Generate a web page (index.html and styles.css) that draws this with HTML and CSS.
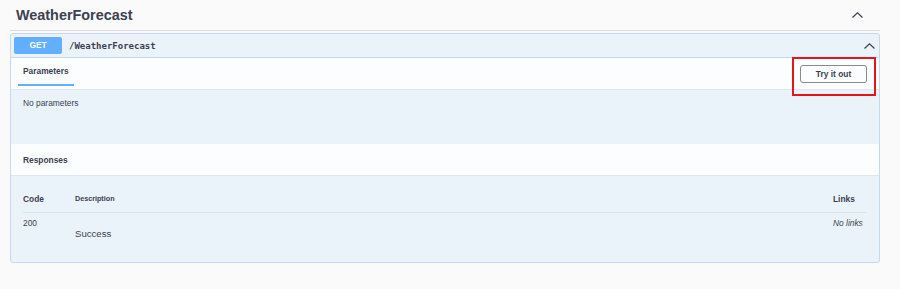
FILE: index.html
```html
<!DOCTYPE html>
<html lang="en">
<head>
<meta charset="utf-8">
<title>WeatherForecast</title>
<link rel="stylesheet" href="styles.css">
</head>
<body>
<div class="wrapper">
  <div class="tag">
    <h3 class="tag-title">WeatherForecast</h3>
    <svg class="chev" width="11" height="6" viewBox="0 0 11 6"><path d="M0.5 5.5 L5.5 0.8 L10.5 5.5" fill="none" stroke="#3b4151" stroke-width="1.2"/></svg>
  </div>
  <div class="opblock">
    <div class="summary">
      <span class="method">GET</span>
      <span class="path">/WeatherForecast</span>
      <svg class="chev chev-sm" width="11" height="6" viewBox="0 0 11 6"><path d="M0.5 5.5 L5.5 0.8 L10.5 5.5" fill="none" stroke="#3b4151" stroke-width="1.2"/></svg>
    </div>
    <div class="section-header">
      <div class="tab">Parameters</div>
      <div class="try-wrap"><button class="try">Try it out</button></div>
    </div>
    <div class="params-body">No parameters</div>
    <div class="section-header resp-header">
      <div class="resp-title">Responses</div>
    </div>
    <div class="resp-body">
      <div class="table">
        <div class="th th-code">Code</div>
        <div class="th th-desc">Description</div>
        <div class="th th-links">Links</div>
        <div class="td td-code">200</div>
        <div class="td td-desc"><p class="success">Success</p></div>
        <div class="td td-links"><i>No links</i></div>
      </div>
    </div>
  </div>
</div>
</body>
</html>
```
FILE: styles.css
```css
* { box-sizing: border-box; }
html, body { margin: 0; padding: 0; }
body {
  background: #fafafa;
  font-family: "Liberation Sans", Arial, sans-serif;
  color: #3b4151;
  width: 900px;
  height: 289px;
  overflow: hidden;
}
.wrapper { padding: 0 20px 0 10px; }
.tag {
  display: flex;
  align-items: center;
  justify-content: space-between;
  height: 31px;
  padding: 0 17px 0 6px;
  border-bottom: 1px solid #d9dce2;
}
.tag-title {
  margin: 0;
  font-size: 14.4px;
  font-weight: bold;
  line-height: 18px;
}
.chev { display: block; }
.opblock {
  margin-top: 2px;
  border: 1px solid #c4d9ee;
  border-radius: 3px;
  background: #ebf3fa;
}
.summary {
  display: flex;
  align-items: center;
  height: 24px;
  padding: 0 4px 0 3px;
  border-bottom: 1px solid #c4d9ee;
}
.method {
  width: 48px;
  height: 17px;
  line-height: 17px;
  text-align: center;
  background: #61affe;
  color: #fff;
  font-weight: bold;
  font-size: 8.4px;
  border-radius: 2px;
}
.path {
  margin-left: 7px;
  font-family: "DejaVu Sans Mono", "Liberation Mono", monospace;
  font-weight: bold;
  font-size: 9px;
  flex: 1;
}
.chev-sm { margin-top: 1px; }
.section-header {
  display: flex;
  align-items: center;
  justify-content: space-between;
  height: 32px;
  padding: 0 12px 0 7px;
  background: #fbfdfe;
  border-bottom: 1px solid #dfe8f1;
}
.tab {
  align-self: stretch;
  display: flex;
  align-items: center;
  padding: 0 5px;
  font-size: 8.4px;
  font-weight: bold;
  border-bottom: 2px solid #61affe;
  margin-bottom: 3px;
}
.try-wrap { position: relative; }
.try-wrap::after {
  content: "";
  position: absolute;
  left: -8px;
  right: -9px;
  top: -8px;
  bottom: -13px;
  border: 2px solid #e8141b;
}
.try {
  display: block;
  width: 67px;
  height: 18px;
  padding: 0;
  background: transparent;
  border: 1px solid #8a8a8a;
  border-radius: 3px;
  font-family: "Liberation Sans", Arial, sans-serif;
  font-size: 8.4px;
  font-weight: bold;
  color: #3b4151;
}
.params-body {
  height: 54px;
  padding: 7px 12px 0;
  font-size: 8.4px;
  line-height: 12px;
}
.resp-header { height: 32px; padding-left: 12px; }
.resp-title { font-size: 8.4px; font-weight: bold; }
.resp-body { padding: 16px 12px 22px; }
.table {
  display: grid;
  grid-template-columns: 52px 1fr 34px;
}
.th {
  font-weight: bold;
  font-size: 8.4px;
  line-height: 14px;
  padding-bottom: 6px;
  border-bottom: 1px solid #dbe3ec;
}
.th-desc { font-size: 7.2px; }
.td {
  font-size: 8.4px;
  line-height: 12px;
  padding-top: 4px;
}
.success {
  margin: 11px 0 0;
  font-size: 9.6px;
  line-height: 12px;
}
.td-links i { color: #3b4151; white-space: nowrap; }
```
